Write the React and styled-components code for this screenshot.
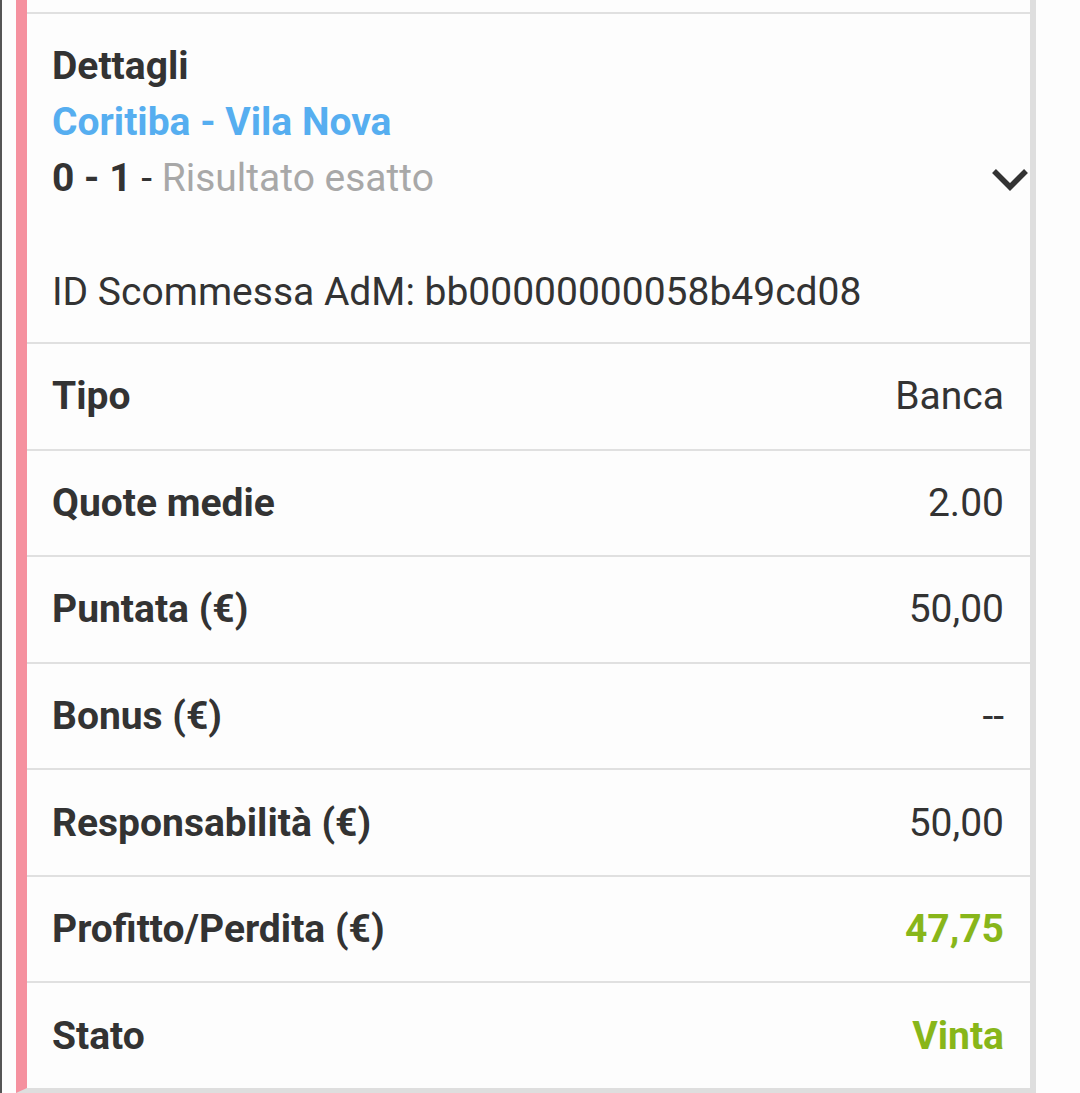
import React from "react";
import styled, { createGlobalStyle } from "styled-components";

const Global = createGlobalStyle`
  html, body { margin: 0; padding: 0; background: #fdfdfd; }
  body { font-family: Roboto, "Noto Sans", sans-serif; color: #333; }
`;

const Page = styled.div`
  display: flex;
  height: 1093px;
  overflow: hidden;
  background: #fdfdfd;
`;

const EdgeLine = styled.div`
  width: 2px;
  flex: none;
  background: #555;
  margin-right: 14px;
`;

const Card = styled.div`
  width: 1020px;
  box-sizing: border-box;
  border-left: 11px solid #f5919f;
  border-right: 6px solid #dedede;
  border-bottom: 5px solid #dedede;
  background: #fdfdfd;
  display: flex;
  flex-direction: column;
`;

const PrevSection = styled.div`
  height: 12px;
`;

const Details = styled.div`
  border-top: 2.6px solid #e0e0e0;
  padding: 24px 26px 22px 25px;
  display: flex;
  flex-direction: column;
`;

const Line = styled.div`
  font-size: 39px;
  line-height: 56px;
  font-weight: ${(p) => (p.$bold ? 700 : 400)};
  color: ${(p) => p.$color || "#333"};
  white-space: nowrap;
`;

const ResultLine = styled.div`
  display: flex;
  align-items: center;
  justify-content: space-between;
  font-size: 39px;
  line-height: 56px;
`;

const Score = styled.span`
  font-weight: 700;
  color: #333;
`;

const Dash = styled.span`
  color: #333;
`;

const Market = styled.span`
  color: #a8a8a8;
`;

const Chevron = styled.svg`
  width: 38px;
  height: 26px;
  margin-right: -25px;
  margin-top: 4px;
`;

const IdLine = styled.div`
  margin-top: 58px;
  font-size: 39px;
  line-height: 56px;
  color: #333;
  white-space: nowrap;
`;

const Row = styled.div`
  height: 106.6px;
  box-sizing: border-box;
  border-top: 2.6px solid #e0e0e0;
  padding: 0 26px 0 25px;
  display: flex;
  align-items: center;
  justify-content: space-between;
  font-size: 39px;
`;

const Label = styled.span`
  font-weight: 700;
  color: #333;
`;

const Value = styled.span`
  font-weight: ${(p) => (p.$green ? 700 : 400)};
  color: ${(p) => (p.$green ? "#88b61a" : "#333")};
`;

const rows = [
  ["Tipo", "Banca"],
  ["Quote medie", "2.00"],
  ["Puntata (€)", "50,00"],
  ["Bonus (€)", "--"],
  ["Responsabilità (€)", "50,00"],
  ["Profitto/Perdita (€)", "47,75", true],
  ["Stato", "Vinta", true],
];

export default function App() {
  return (
    <>
      <Global />
      <Page>
        <EdgeLine />
        <Card>
          <PrevSection />
          <Details>
            <Line $bold>Dettagli</Line>
            <Line $bold $color="#56aef0">Coritiba - Vila Nova</Line>
            <ResultLine>
              <span>
                <Score>0 - 1</Score>
                <Dash> - </Dash>
                <Market>Risultato esatto</Market>
              </span>
              <Chevron viewBox="0 0 38 26">
                <path d="M3 4 L19 20 L35 4" fill="none" stroke="#333" strokeWidth="5.5" strokeLinejoin="miter" />
              </Chevron>
            </ResultLine>
            <IdLine>ID Scommessa AdM: bb00000000058b49cd08</IdLine>
          </Details>
          {rows.map(([l, v, g]) => (
            <Row key={l}>
              <Label>{l}</Label>
              <Value $green={g}>{v}</Value>
            </Row>
          ))}
        </Card>
      </Page>
    </>
  );
}
